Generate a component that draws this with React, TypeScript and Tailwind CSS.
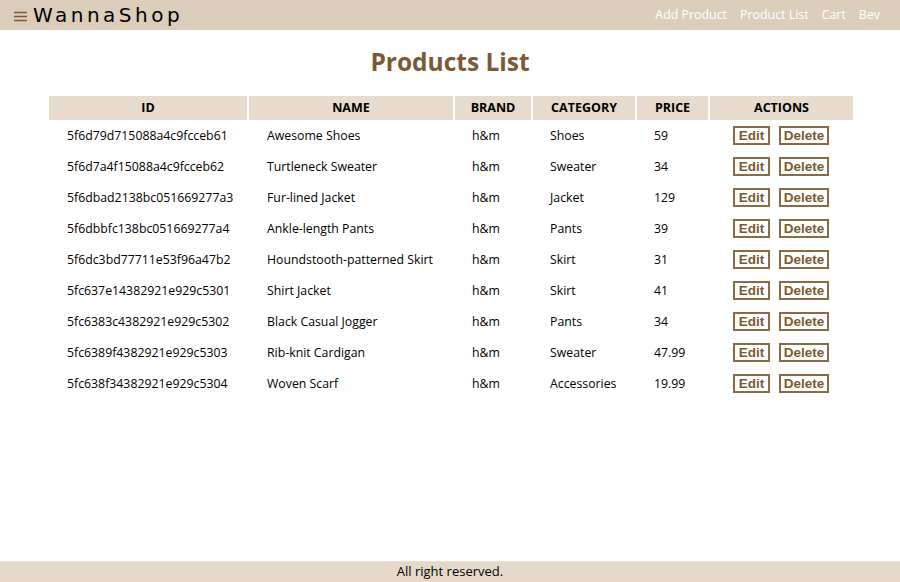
import React from 'react';

const products = [
  { id: '5f6d79d715088a4c9fcceb61', name: 'Awesome Shoes', brand: 'h&m', category: 'Shoes', price: '59' },
  { id: '5f6d7a4f15088a4c9fcceb62', name: 'Turtleneck Sweater', brand: 'h&m', category: 'Sweater', price: '34' },
  { id: '5f6dbad2138bc051669277a3', name: 'Fur-lined Jacket', brand: 'h&m', category: 'Jacket', price: '129' },
  { id: '5f6dbbfc138bc051669277a4', name: 'Ankle-length Pants', brand: 'h&m', category: 'Pants', price: '39' },
  { id: '5f6dc3bd77711e53f96a47b2', name: 'Houndstooth-patterned Skirt', brand: 'h&m', category: 'Skirt', price: '31' },
  { id: '5fc637e14382921e929c5301', name: 'Shirt Jacket', brand: 'h&m', category: 'Skirt', price: '41' },
  { id: '5fc6383c4382921e929c5302', name: 'Black Casual Jogger', brand: 'h&m', category: 'Pants', price: '34' },
  { id: '5fc6389f4382921e929c5303', name: 'Rib-knit Cardigan', brand: 'h&m', category: 'Sweater', price: '47.99' },
  { id: '5fc638f34382921e929c5304', name: 'Woven Scarf', brand: 'h&m', category: 'Accessories', price: '19.99' },
];

export default function App() {
  return (
    <div className="min-h-[582px] flex flex-col bg-white font-['Open_Sans',sans-serif] text-[12.3px] text-black">
      <header className="h-[30px] bg-[#dccdbb] flex items-center justify-between pl-[14px] pr-[20px]">
        <div className="flex items-center gap-[6px]">
          <svg width="13" height="11" viewBox="0 0 13 11" className="mt-[3px]">
            <path d="M0 1.5h13M0 5.5h13M0 9.5h13" stroke="#7b5a33" strokeWidth="1.6" />
          </svg>
          <span className="text-[20px] tracking-[3.5px] font-['DejaVu_Sans',sans-serif] leading-none">WannaShop</span>
        </div>
        <nav className="flex gap-[13px] text-white text-[12.4px]">
          <a>Add Product</a>
          <a>Product List</a>
          <a>Cart</a>
          <a>Bev</a>
        </nav>
      </header>

      <main className="flex-1">
        <h1 className="text-center text-[#7b5a33] text-[24.5px] font-bold mt-[14px] mb-[16px] leading-[36px]">
          Products List
        </h1>
        <table className="mx-[49px] w-[804px] border-collapse">
          <thead>
            <tr className="bg-[#e6dbcc] h-[24px] text-[12.5px] font-bold">
              <th className="w-[199px] border-r-2 border-white">ID</th>
              <th className="w-[206px] border-r-2 border-white">NAME</th>
              <th className="w-[78px] border-r-2 border-white">BRAND</th>
              <th className="w-[104px] border-r-2 border-white">CATEGORY</th>
              <th className="w-[73px] border-r-2 border-white">PRICE</th>
              <th>ACTIONS</th>
            </tr>
          </thead>
          <tbody>
            {products.map((p) => (
              <tr key={p.id} className="h-[31px]">
                <td className="pl-[18px] pt-[2px]">{p.id}</td>
                <td className="pl-[19px] pt-[2px]">{p.name}</td>
                <td className="pl-[18px] pt-[2px]">{p.brand}</td>
                <td className="pl-[18px] pt-[2px]">{p.category}</td>
                <td className="pl-[18px] pt-[2px]">{p.price}</td>
                <td className="pl-[24px]">
                  <div className="flex gap-[9px] font-['Liberation_Sans',sans-serif] font-bold text-[#7b5a33] text-[13.5px]">
                    <button className="border-2 border-[#8b6a45] h-[19px] w-[37px] leading-none">Edit</button>
                    <button className="border-2 border-[#8b6a45] h-[19px] w-[50px] leading-none">Delete</button>
                  </div>
                </td>
              </tr>
            ))}
          </tbody>
        </table>
      </main>

      <footer className="h-[21px] bg-[#e4d9c9] border-t border-[#ece4d9] flex items-center justify-center text-[13px]">
        All right reserved.
      </footer>
    </div>
  );
}
